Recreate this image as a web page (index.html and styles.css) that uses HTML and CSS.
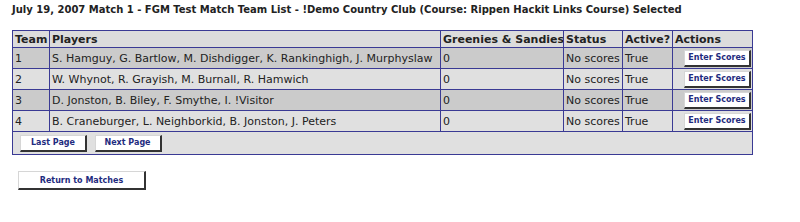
FILE: index.html
```html
<!DOCTYPE html>
<html lang="en">
<head>
    <meta charset="UTF-8">
    <title>Team List</title>
    <link rel="stylesheet" href="styles.css">
</head>
<body>
    <div class="page-title">July 19, 2007 Match 1 - FGM Test Match Team List - !Demo Country Club (Course: Rippen Hackit Links Course) Selected</div>

    <table class="team-list">
        <colgroup>
            <col class="col-team">
            <col class="col-players">
            <col class="col-greenies">
            <col class="col-status">
            <col class="col-active">
            <col class="col-actions">
        </colgroup>
        <tr class="head-row">
            <th>Team</th>
            <th>Players</th>
            <th>Greenies &amp; Sandies</th>
            <th>Status</th>
            <th>Active?</th>
            <th>Actions</th>
        </tr>
        <tr class="row-dark">
            <td>1</td>
            <td>S. Hamguy, G. Bartlow, M. Dishdigger, K. Rankinghigh, J. Murphyslaw</td>
            <td>0</td>
            <td>No scores</td>
            <td>True</td>
            <td class="action-cell"><button class="btn">Enter Scores</button></td>
        </tr>
        <tr class="row-light">
            <td>2</td>
            <td>W. Whynot, R. Grayish, M. Burnall, R. Hamwich</td>
            <td>0</td>
            <td>No scores</td>
            <td>True</td>
            <td class="action-cell"><button class="btn">Enter Scores</button></td>
        </tr>
        <tr class="row-dark">
            <td>3</td>
            <td>D. Jonston, B. Biley, F. Smythe, I. !Visitor</td>
            <td>0</td>
            <td>No scores</td>
            <td>True</td>
            <td class="action-cell"><button class="btn">Enter Scores</button></td>
        </tr>
        <tr class="row-light">
            <td>4</td>
            <td>B. Craneburger, L. Neighborkid, B. Jonston, J. Peters</td>
            <td>0</td>
            <td>No scores</td>
            <td>True</td>
            <td class="action-cell"><button class="btn">Enter Scores</button></td>
        </tr>
        <tr class="row-light">
            <td colspan="6" class="pager">
                <button class="btn">Last Page</button>
                <button class="btn">Next Page</button>
            </td>
        </tr>
    </table>

    <div class="return-bar">
        <button class="btn btn-wide">Return to Matches</button>
    </div>
</body>
</html>
```

FILE: styles.css
```css
body {
    margin: 0;
    padding: 3px 12px;
    font-family: "DejaVu Sans", Verdana, sans-serif;
    font-size: 11px;
    color: #222;
    background-color: #fff;
}
.page-title {
    font-size: 10px;
    font-weight: bold;
    line-height: 14px;
    margin-bottom: 13px;
}
.team-list {
    border-collapse: collapse;
    border: 1px solid #3a3a94;
    table-layout: fixed;
    width: 740px;
}
.col-team { width: 37px; }
.col-players { width: 391px; }
.col-greenies { width: 123px; }
.col-status { width: 59px; }
.col-active { width: 50px; }
.col-actions { width: 80px; }
.team-list th,
.team-list td {
    border: 1px solid #3a3a94;
    padding: 0 2px;
    text-align: left;
    white-space: nowrap;
    overflow: hidden;
}
.team-list th {
    height: 16px;
    font-size: 11px;
    background-color: #dcdcdc;
}
.team-list td {
    height: 20px;
}
.row-dark {
    background-color: #cbcbcb;
}
.row-light {
    background-color: #e0e0e0;
}
.team-list td.action-cell {
    text-align: right;
    padding-right: 1px;
}
.btn {
    width: 67px;
    height: 17px;
    padding: 0;
    font-family: "DejaVu Sans", Verdana, sans-serif;
    font-size: 8px;
    font-weight: bold;
    color: #1f2c80;
    background-color: #fff;
    border-top: 1px solid #d6d6d6;
    border-left: 1px solid #d6d6d6;
    border-right: 2px solid #333;
    border-bottom: 2px solid #333;
    cursor: pointer;
}
.team-list td.pager {
    height: 22px;
    padding: 0 0 0 7px;
}
.pager .btn {
    margin-right: 4px;
}
.return-bar {
    margin-top: 16px;
    padding-left: 6px;
}
.btn-wide {
    width: 128px;
    height: 19px;
}
```
